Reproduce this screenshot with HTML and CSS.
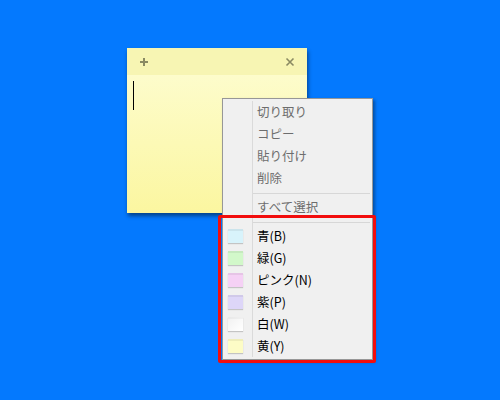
FILE: index.html
```html
<!DOCTYPE html>
<html lang="ja">
<head>
<meta charset="utf-8">
<link rel="stylesheet" href="styles.css">
</head>
<body>
<div class="desktop">
  <div class="note">
    <div class="note-head">
      <svg class="icon" width="10" height="10" viewBox="0 0 10 10"><path d="M5 1v8M1 5h8" stroke="#8a8a62" stroke-width="2"/></svg>
      <svg class="icon" width="10" height="10" viewBox="0 0 10 10"><path d="M1.5 1.5l7 7M8.5 1.5l-7 7" stroke="#8a8a62" stroke-width="1.6"/></svg>
    </div>
    <div class="note-body"><span class="caret"></span></div>
  </div>

  <div class="menu">
    <div class="row disabled"><span class="ic"></span><span class="tx">切り取り</span></div>
    <div class="row disabled"><span class="ic"></span><span class="tx">コピー</span></div>
    <div class="row disabled"><span class="ic"></span><span class="tx">貼り付け</span></div>
    <div class="row disabled"><span class="ic"></span><span class="tx">削除</span></div>
    <div class="sep"><span class="ic"></span><span class="tx"><i></i></span></div>
    <div class="row disabled"><span class="ic"></span><span class="tx">すべて選択</span></div>
    <div class="sep"><span class="ic"></span><span class="tx"><i></i></span></div>
    <div class="row"><span class="ic"><b class="sw blue"></b></span><span class="tx">青(B)</span></div>
    <div class="row"><span class="ic"><b class="sw green"></b></span><span class="tx">緑(G)</span></div>
    <div class="row"><span class="ic"><b class="sw pink"></b></span><span class="tx">ピンク(N)</span></div>
    <div class="row"><span class="ic"><b class="sw purple"></b></span><span class="tx">紫(P)</span></div>
    <div class="row"><span class="ic"><b class="sw white"></b></span><span class="tx">白(W)</span></div>
    <div class="row"><span class="ic"><b class="sw yellow"></b></span><span class="tx">黄(Y)</span></div>
  </div>

  <div class="highlight"></div>
</div>
</body>
</html>
```

FILE: styles.css
```css
html, body {
  margin: 0;
  padding: 0;
}
body {
  background: #0479fe;
  font-family: "Noto Sans CJK JP", "Noto Sans", sans-serif;
}
.desktop {
  position: relative;
  width: 500px;
  height: 400px;
  overflow: hidden;
  background: #0479fe;
}
.note {
  position: absolute;
  left: 127px;
  top: 48px;
  width: 180px;
  height: 165px;
  display: flex;
  flex-direction: column;
  box-shadow: 1px 3px 4px rgba(0, 0, 0, 0.45);
}
.note-head {
  height: 27px;
  background: #f7f5b3;
  display: flex;
  align-items: center;
  justify-content: space-between;
  padding: 0 12px 0 12px;
}
.icon {
  display: block;
}
.note-body {
  flex: 1;
  background: linear-gradient(#fdfccb, #fbf6a0);
  padding: 6px 0 0 6px;
}
.caret {
  display: block;
  width: 1px;
  height: 29px;
  background: #000;
}
.menu {
  position: absolute;
  left: 222px;
  top: 98px;
  width: 149px;
  padding: 2px 0;
  background: #f0f0f0;
  border: 1px solid #979797;
  box-shadow: 2px 2px 3px rgba(0, 0, 0, 0.35);
  font-size: 12.5px;
}
.row, .sep {
  display: grid;
  grid-template-columns: 29px 1fr;
}
.row {
  height: 22px;
}
.sep {
  height: 7px;
}
.ic {
  display: flex;
  align-items: center;
  padding-left: 5px;
}
.tx {
  border-left: 1px solid #dadada;
  padding-left: 4px;
  padding-bottom: 2px;
  box-sizing: border-box;
  display: flex;
  align-items: center;
  color: #000;
  white-space: nowrap;
}
.disabled .tx {
  color: #6d6d6d;
}
.sep .tx {
  padding-left: 0;
  padding-right: 2px;
  padding-bottom: 0;
}
.sep i {
  display: block;
  width: 100%;
  height: 1px;
  background: #d7d7d7;
  margin-top: 1px;
}
.sw {
  display: block;
  width: 15px;
  height: 14px;
  box-sizing: border-box;
  border-top: 2px solid rgba(0, 0, 0, 0.06);
  box-shadow: 0 1px 1px rgba(0, 0, 0, 0.18);
}
.blue { background: #d8f3fb; }
.green { background: #d2f8ca; }
.pink { background: #f5d1f5; }
.purple { background: #ddd6f8; }
.white { background: linear-gradient(135deg, #f2f2f2, #ffffff); }
.yellow { background: #fdfcc6; }
.highlight {
  position: absolute;
  left: 218px;
  top: 215px;
  width: 152px;
  height: 142px;
  border: 3px solid #f20d0d;
  border-radius: 2px;
}
```
